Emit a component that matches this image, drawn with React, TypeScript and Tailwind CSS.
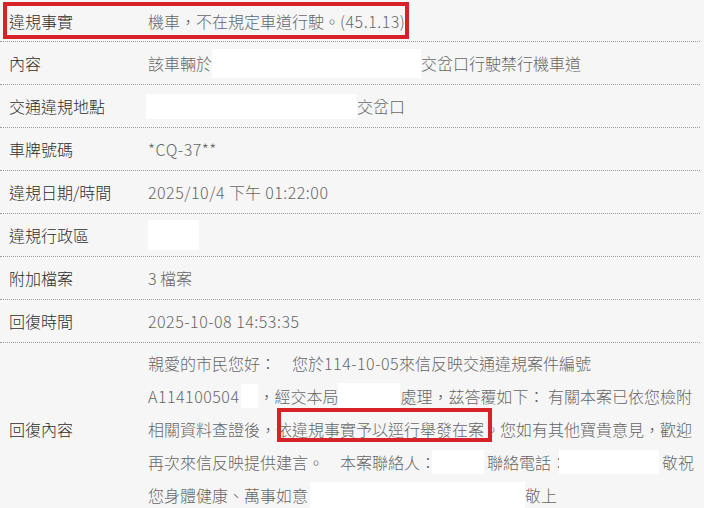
import React from "react";

const W = ({ w, h = 25, className = "" }: { w: number; h?: number; className?: string }) => (
  <span className={"inline-block bg-white shrink-0 " + className} style={{ width: w, height: h }} />
);

const L = ({ children }: { children: React.ReactNode }) => <span className="tracking-[0.5px]">{children}</span>;

function Row({ label, children, first = false }: { label: string; children: React.ReactNode; first?: boolean }) {
  return (
    <div
      className={
        "flex items-center border-b border-dotted border-[#9c9c9c] " + (first ? "h-[42px]" : "h-[43px]")
      }
    >
      <div className="w-[148px] shrink-0 pl-[9px] text-[#2e2e2e]">{label}</div>
      <div className="flex items-center whitespace-pre text-[#666]">{children}</div>
    </div>
  );
}

export default function App() {
  return (
    <div
      className="relative w-[704px] h-[508px] overflow-hidden bg-[#f6f6f6] text-[16px] leading-none font-light"
      style={{ fontFamily: '"Noto Sans CJK TC", "Noto Sans", sans-serif' }}
    >
      <div className="w-[700px]">
        <Row label="違規事實" first>
          <span>機車，不在規定車道行駛。</span>
          <L>(45.1.13)</L>
        </Row>
        <Row label="內容">
          <span>該車輛於</span>
          <W w={209} h={29} />
          <span>交岔口行駛禁行機車道</span>
        </Row>
        <Row label="交通違規地點">
          <W w={211} h={25} className="-ml-[2px]" />
          <span>交岔口</span>
        </Row>
        <Row label="車牌號碼">
          <L>*CQ-37**</L>
        </Row>
        <Row label="違規日期/時間">
          <L>2025/10/4 </L>
          <span>下午</span>
          <L> 01:22:00</L>
        </Row>
        <Row label="違規行政區">
          <W w={51} h={30} />
        </Row>
        <Row label="附加檔案">3 檔案</Row>
        <Row label="回復時間">
          <L>2025-10-08 14:53:35</L>
        </Row>
        <div className="flex items-center">
          <div className="w-[148px] shrink-0 pl-[9px] text-[#2e2e2e]">回復內容</div>
          <div className="flex flex-col py-[3px] text-[#666] whitespace-pre">
            <div className="flex items-center h-[33px]">
              <span>親愛的市民您好：　您於</span>
              <L>114-10-05</L>
              <span>來信反映交通違規案件編號</span>
            </div>
            <div className="flex items-center h-[33px]">
              <L>A114100504</L>
              <W w={17} h={24} className="ml-[2px]" />
              <span>，經交本局</span>
              <W w={62} h={25} />
              <span>處理，茲答覆如下： 有關本案已依您檢附</span>
            </div>
            <div className="flex items-center h-[33px]">
              <span>相關資料查證後，</span>
              <span>依違規事實予以逕行舉發在案</span>
              <span>。您如有其他寶貴意見，歡迎</span>
            </div>
            <div className="flex items-center h-[33px]">
              <span>再次來信反映提供建言。　本案聯絡人：</span>
              <W w={52} h={24} className="-ml-[4px]" />
              <span className="ml-[3px]">聯絡電話：</span>
              <W w={100} h={24} className="-ml-[8px]" />
              <span className="ml-[3px]">敬祝</span>
            </div>
            <div className="flex items-center h-[33px]">
              <span>您身體健康、萬事如意</span>
              <W w={215} h={26} className="ml-[2px]" />
              <span>敬上</span>
            </div>
          </div>
        </div>
      </div>

      <div className="absolute left-[3px] top-[2px] w-[406px] h-[37px] border-[4px] border-[#d8222a]" />
      <div className="absolute left-[277px] top-[408px] w-[215px] h-[34px] border-[4px] border-[#d8222a]" />
    </div>
  );
}
